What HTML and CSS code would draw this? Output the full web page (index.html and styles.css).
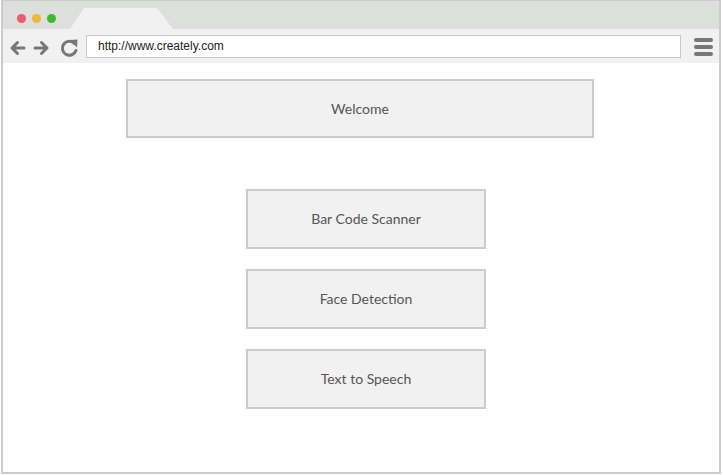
FILE: index.html
```html
<!DOCTYPE html>
<html>
<head>
<meta charset="utf-8">
<link rel="stylesheet" href="styles.css">
</head>
<body>
<div class="window">
  <div class="tabbar">
    <div class="dots">
      <span class="dot red"></span>
      <span class="dot yellow"></span>
      <span class="dot green"></span>
    </div>
    <div class="tab"></div>
  </div>
  <div class="toolbar">
    <svg class="nav" width="80" height="34" viewBox="0 0 80 34">
      <g fill="none" stroke="#777" stroke-width="3" stroke-linecap="round" stroke-linejoin="round">
        <path d="M10 18 H22 M15.5 12.5 L10 18 L15.5 23.5"/>
        <path d="M33 18 H45 M39.5 12.5 L45 18 L39.5 23.5"/>
        <path d="M72.5 13.5 A7 7 0 1 0 74 20.5"/>
      </g>
      <path d="M67.5 10 L75.5 9.5 L75 17.5 Z" fill="#777"/>
    </svg>
    <div class="url">http://www.creately.com</div>
    <div class="menu">
      <span></span><span></span><span></span>
    </div>
  </div>
  <div class="content">
    <div class="box welcome">Welcome</div>
    <div class="buttons">
      <div class="box btn">Bar Code Scanner</div>
      <div class="box btn">Face Detection</div>
      <div class="box btn">Text to Speech</div>
    </div>
  </div>
</div>
</body>
</html>
```
FILE: styles.css
```css
html, body {
  margin: 0;
  padding: 0;
  background: #fff;
}
.window {
  margin-left: 1px;
  width: 720px;
  height: 474px;
  box-sizing: border-box;
  border: 2px solid #cccccc;
  border-top: 1px solid #cccccc;
  display: flex;
  flex-direction: column;
}
.tabbar {
  height: 28px;
  background: #dddfdc;
  display: flex;
  align-items: flex-end;
}
.dots {
  display: flex;
  gap: 6px;
  margin-left: 14px;
  margin-bottom: 6px;
}
.dot {
  width: 9px;
  height: 9px;
  border-radius: 50%;
  display: block;
}
.red { background: #ec5c6b; }
.yellow { background: #f0b636; }
.green { background: #3cbb2a; }
.tab {
  margin-left: 14px;
  width: 103px;
  height: 21px;
  background: #f1f1f1;
  clip-path: polygon(14px 0, 87px 0, 103px 100%, 0 100%);
}
.toolbar {
  height: 34px;
  background: #f1f1f1;
  display: flex;
  align-items: center;
}
.nav {
  display: block;
  flex: none;
  margin-left: -1px;
  margin-top: 1px;
}
.url {
  margin-left: 4px;
  width: 595px;
  height: 23px;
  box-sizing: border-box;
  background: #fff;
  border: 1px solid #c8c8c8;
  font-family: "Liberation Sans", Arial, sans-serif;
  font-size: 12px;
  color: #222;
  line-height: 21px;
  padding-left: 11px;
  margin-top: 1px;
}
.menu {
  margin-left: 13px;
  display: flex;
  flex-direction: column;
  gap: 3px;
  margin-top: 1px;
}
.menu span {
  display: block;
  width: 19px;
  height: 4px;
  border-radius: 2px;
  background: #777;
}
.content {
  flex: 1;
  background: #fff;
  padding-top: 16px;
}
.box {
  box-sizing: border-box;
  background: #f1f1f1;
  border: 2px solid #cccccc;
  display: flex;
  align-items: center;
  justify-content: center;
  font-family: Lato, "Open Sans", sans-serif;
  font-size: 14px;
  color: #555;
  padding-bottom: 1px;
}
.welcome {
  margin-left: 123px;
  width: 468px;
  height: 59px;
  padding-bottom: 0;
}
.buttons {
  margin-top: 51px;
  margin-left: 243px;
  display: flex;
  flex-direction: column;
  gap: 20px;
}
.btn {
  width: 240px;
  height: 60px;
}
```
